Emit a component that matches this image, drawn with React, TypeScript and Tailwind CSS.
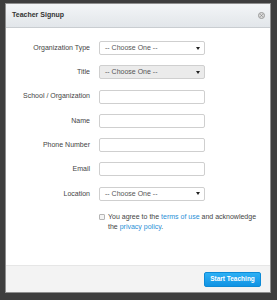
import React from 'react';

const font = { fontFamily: '"Liberation Sans", Arial, Helvetica, sans-serif' };

function SelectBox({ disabled }: { disabled?: boolean }) {
  return (
    <div
      className={`w-[106px] h-[14px] flex items-center justify-between pl-[5px] pr-[4px] border border-[#cfcfcf] rounded-[2px] text-[7px] text-[#555] ${
        disabled ? 'bg-[#ebebeb]' : 'bg-white'
      }`}
    >
      <span>-- Choose One --</span>
      <svg width="4" height="3" viewBox="0 0 4 3">
        <path d="M0 0 L4 0 L2 3 Z" fill="#222" />
      </svg>
    </div>
  );
}

function TextBox() {
  return <div className="w-[106px] h-[14px] border border-[#cfcfcf] rounded-[2px] bg-white" />;
}

const rows: { label: string; field: React.ReactNode }[] = [
  { label: 'Organization Type', field: <SelectBox /> },
  { label: 'Title', field: <SelectBox disabled /> },
  { label: 'School / Organization', field: <TextBox /> },
  { label: 'Name', field: <TextBox /> },
  { label: 'Phone Number', field: <TextBox /> },
  { label: 'Email', field: <TextBox /> },
  { label: 'Location', field: <SelectBox /> },
];

export default function App() {
  return (
    <div className="w-[277px] h-[300px] bg-[#3e3e3e] pt-[3px] pl-[5px] pr-[6px] pb-[7px]" style={font}>
      <div className="h-full flex flex-col bg-white border border-[#8e8e8e]">
        {/* Header */}
        <div className="h-[24px] shrink-0 flex items-center justify-between pl-[6px] pr-[5px] bg-gradient-to-b from-[#f3f5f7] to-[#e2e6ea] border-b border-[#c9cdd1]">
          <span className="text-[7px] font-bold text-[#333]">Teacher Signup</span>
          <svg width="7" height="7" viewBox="0 0 7 7">
            <circle cx="3.5" cy="3.5" r="3" fill="#d9d9d9" stroke="#9a9a9a" strokeWidth="1" />
            <path d="M2.3 2.3 L4.7 4.7 M4.7 2.3 L2.3 4.7" stroke="#8a8a8a" strokeWidth="0.8" />
          </svg>
        </div>

        {/* Body */}
        <div className="flex-1 pt-[13px]">
          <div className="flex flex-col gap-[10.3px]">
            {rows.map((r) => (
              <div key={r.label} className="flex items-center h-[14px]">
                <span className="w-[84px] text-right text-[7px] text-[#444] pr-0">{r.label}</span>
                <div className="ml-[9px]">{r.field}</div>
              </div>
            ))}
          </div>

          <div className="flex mt-[11px] ml-[93px]">
            <div className="w-[6px] h-[6px] mt-[2.5px] border border-[#b5b5b5] rounded-[1px] bg-[#f4f4f4] shrink-0" />
            <p className="ml-[3px] w-[152px] text-[7px] leading-[10.6px] text-[#444]">
              You agree to the <span className="text-[#2a8fd6]">terms of use</span> and acknowledge the{' '}
              <span className="text-[#2a8fd6]">privacy policy</span>.
            </p>
          </div>
        </div>

        {/* Footer */}
        <div className="h-[27px] shrink-0 flex items-center justify-end pr-[9px] bg-[#f3f3f3] border-t border-[#e6e6e6]">
          <button className="w-[57px] h-[15px] rounded-[2px] bg-gradient-to-b from-[#2db0f5] to-[#0f93e3] border border-[#0d8ad6] text-white text-[6.5px] font-bold">
            Start Teaching
          </button>
        </div>
      </div>
    </div>
  );
}
